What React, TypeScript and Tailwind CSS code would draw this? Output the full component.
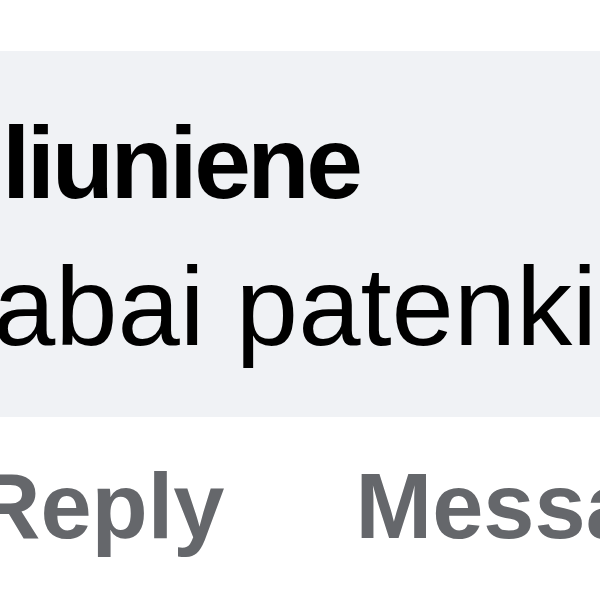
import React from 'react';

export default function App() {
  return <div className="w-[600px] h-[600px] bg-white overflow-hidden pt-[51px]" style={{ fontFamily: '"Liberation Sans", Arial, sans-serif' }}>
      <div className="bg-[#f0f2f5] h-[366px] pt-[61px] overflow-hidden">
        <div className="text-[102px] leading-none font-bold text-black whitespace-nowrap ml-[2px] tracking-[-3.5px]">
          liuniene
        </div>
        <div className="text-[112px] leading-none text-black whitespace-nowrap -ml-[7px] mt-[37px]">
          abai patenki
        </div>
      </div>
      <div className="flex items-baseline gap-[131px] mt-[43px] -ml-[26px] text-[92px] leading-none font-bold text-[#65676b] whitespace-nowrap">
        <span>Reply</span>
        <span>Message</span>
      </div>
    </div>;
}
